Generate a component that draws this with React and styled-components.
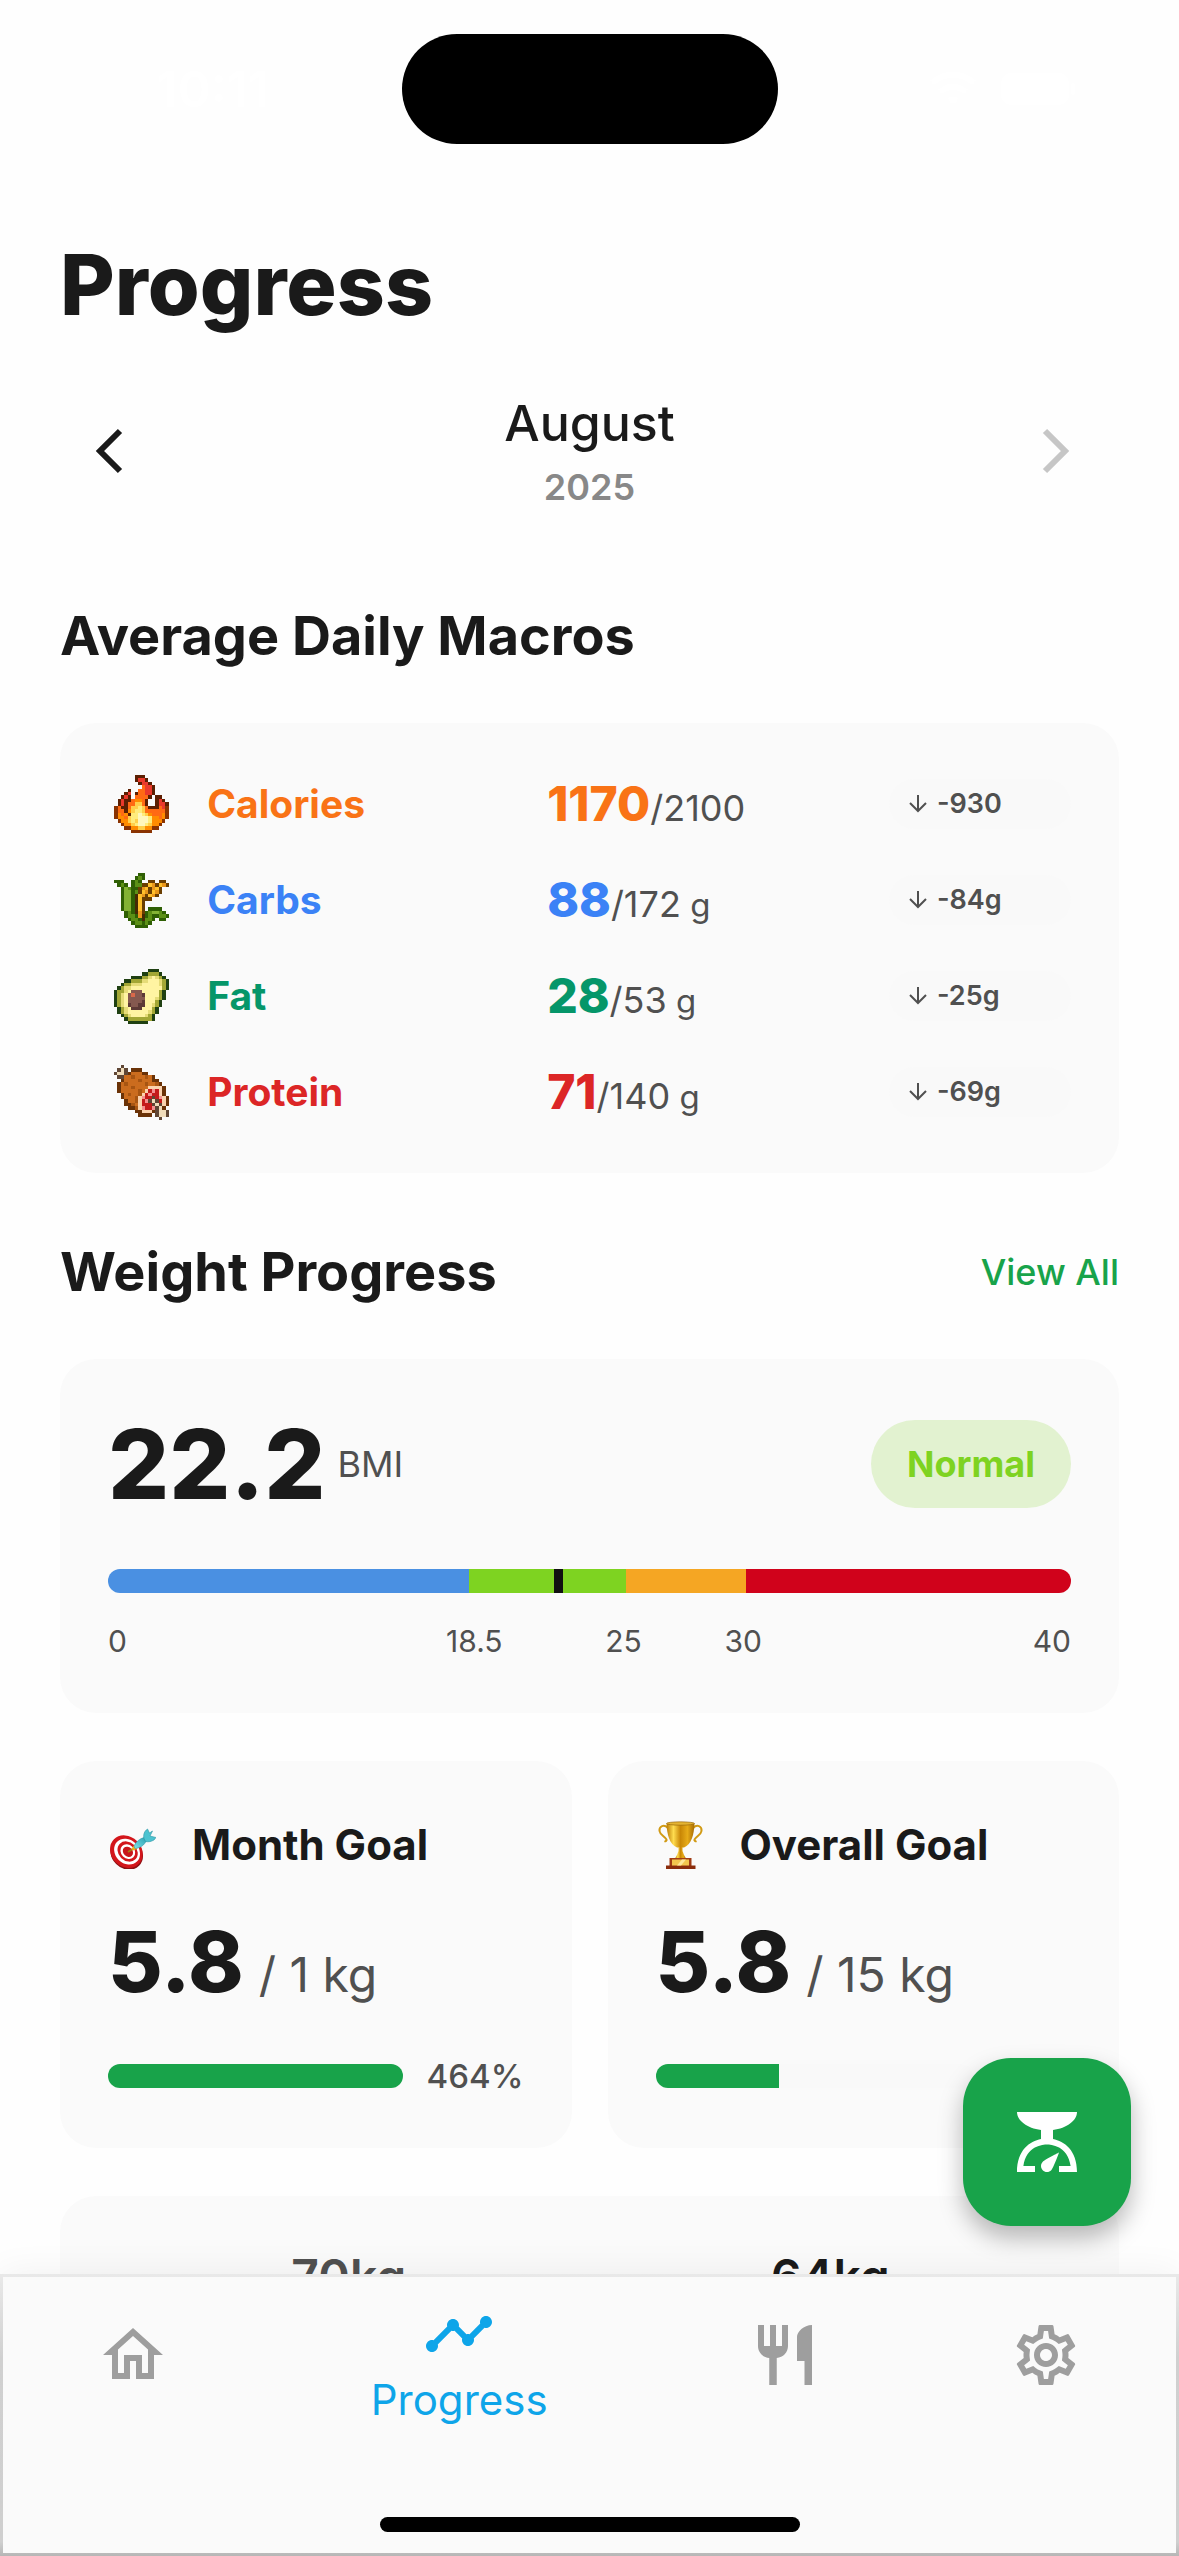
import React from "react";
import styled, { createGlobalStyle } from "styled-components";
import { MdOutlineHome, MdTimeline, MdRestaurant, MdOutlineSettings } from "react-icons/md";

const color = {
  page: "#fefefe",
  card: "#fafafa",
  track: "#f9f9f9",
  ink: "#1a1a1a",
  muted: "#505050",
  faint: "#888888",
  green: "#18a34a",
  blue: "#0ea5e9",
  idle: "#9e9e9e",
};

const GlobalStyle = createGlobalStyle`
  * { box-sizing: border-box; }
  body {
    margin: 0;
    background: ${color.page};
    color: ${color.ink};
    font-family: Inter, "Open Sans", sans-serif;
  }
  h1, h2, h3, p { margin: 0; }
  button { border: 0; padding: 0; background: none; font: inherit; color: inherit; cursor: pointer; }
  svg { display: block; }
`;

/* ---------- shell ---------- */

const Screen = styled.div`
  height: 100vh;
  display: flex;
  flex-direction: column;
  overflow: hidden;
`;

const StatusBar = styled.header`
  flex: none;
  display: grid;
  grid-template-columns: 1fr auto 1fr;
  align-items: center;
  height: 177px;
  color: #fff;
`;

const Clock = styled.time`
  justify-self: center;
  padding-left: 24px;
  font-size: 50px;
  line-height: 60px;
  font-weight: 600;
`;

const Island = styled.div`
  width: 376px;
  height: 110px;
  border-radius: 55px;
  background: #000;
`;

const Signals = styled.div`
  display: flex;
  gap: 24px;
  justify-self: center;
  padding-left: 48px;
`;

const Content = styled.main`
  flex: 1;
  min-height: 0;
  overflow: hidden;
  padding: 60px 60px 0;
`;

const Title = styled.h1`
  font-size: 84px;
  line-height: 96px;
  font-weight: 800;
`;

/* ---------- month picker ---------- */

const MonthPicker = styled.div`
  display: flex;
  align-items: center;
  justify-content: space-between;
  padding: 60px 12px 0;
`;

const StepButton = styled.button`
  width: 84px;
  height: 84px;
  color: ${(p) => (p.disabled ? "#c6c6c6" : color.ink)};
`;

const MonthLabel = styled.div`
  display: flex;
  flex-direction: column;
  align-items: center;
  gap: 12px;
`;

const Month = styled.span`
  font-size: 50px;
  line-height: 60px;
  font-weight: 500;
`;

const Year = styled.span`
  font-size: 36px;
  line-height: 45px;
  font-weight: 600;
  color: ${color.faint};
`;

/* ---------- sections ---------- */

const SectionHead = styled.div`
  display: flex;
  align-items: center;
  justify-content: space-between;
  margin: ${(p) => p.$top}px 0 54px;
`;

const SectionTitle = styled.h2`
  font-size: 54px;
  line-height: 66px;
  font-weight: 700;
`;

const TextLink = styled.a`
  font-size: 36px;
  line-height: 66px;
  font-weight: 500;
  color: ${color.green};
  text-decoration: none;
`;

const Card = styled.section`
  background: ${color.card};
  border-radius: 36px;
  padding: ${(p) => p.$pad || 48}px 48px;
`;

const Stack = styled.div`
  display: flex;
  flex-direction: column;
  gap: 48px;
`;

/* ---------- macros ---------- */

const MacroTable = styled.table`
  width: 100%;
  table-layout: fixed;
  border-collapse: collapse;
  text-align: left;

  th, td { height: 96px; padding: 0; vertical-align: middle; }
`;

const IconCol = styled.col`
  width: 99px;
`;

const ShareCol = styled.col`
  width: ${(p) => p.$share}%;
`;

const IconSlot = styled.span`
  display: flex;
  justify-content: center;
  width: 66px;
`;

const MacroName = styled.th`
  font-size: 39px;
  line-height: 48px;
  font-weight: 700;
  color: ${(p) => p.$tone};
`;

const MacroValue = styled.td`
  font-size: 36px;
  line-height: 36px;
  color: ${color.muted};
  white-space: nowrap;
`;

const Strong = styled.strong`
  font-size: 48px;
  line-height: 60px;
  font-weight: 800;
  color: ${(p) => p.$tone};
`;

const Unit = styled.span`
  font-size: 33px;
`;

const Delta = styled.span`
  display: flex;
  align-items: center;
  gap: 10px;
  height: 50px;
  padding-left: 20px;
  border-radius: 25px;
  background: ${color.track};
  font-size: 27px;
  line-height: 36px;
  font-weight: 600;
  color: ${color.muted};
`;

/* ---------- BMI ---------- */

const BmiHead = styled.div`
  display: flex;
  align-items: center;
  height: 114px;
`;

const BmiValue = styled.strong`
  font-size: 96px;
  line-height: 114px;
  font-weight: 800;
`;

const BmiUnit = styled.span`
  flex: 1;
  padding-left: 12px;
  font-size: 36px;
  line-height: 48px;
  color: ${color.muted};
`;

const StatusPill = styled.span`
  padding: 20px 36px;
  border-radius: 44px;
  background: #e2f2d0;
  font-size: 36px;
  line-height: 48px;
  font-weight: 700;
  color: #7ed321;
`;

const Scale = styled.div`
  position: relative;
  display: flex;
  height: 24px;
  margin: 48px 0 24px;
  border-radius: 12px;
  overflow: hidden;
`;

const Band = styled.span`
  flex: ${(p) => p.$weight};
  background: ${(p) => p.$tone};
`;

const Marker = styled.span`
  position: absolute;
  top: 0;
  bottom: 0;
  width: 9px;
  background: #111;
`;

const Ticks = styled.div`
  display: grid;
  grid-template-columns: 34fr 16fr 12fr 31fr auto;
  font-size: 30px;
  line-height: 48px;
  color: ${color.muted};
`;

/* ---------- goals ---------- */

const GoalGrid = styled.div`
  display: grid;
  grid-template-columns: 1fr 1fr;
  gap: 36px;
`;

const GoalHead = styled.div`
  display: flex;
  align-items: center;
  gap: 36px;
  height: 72px;
`;

const GoalTitle = styled.h3`
  font-size: 42px;
  line-height: 54px;
  font-weight: 700;
`;

const GoalValue = styled.p`
  display: flex;
  align-items: baseline;
  gap: 15px;
  margin: 36px 0 45px;
  font-size: 48px;
  line-height: 60px;
  color: ${color.muted};
  white-space: nowrap;
`;

const GoalNumber = styled.strong`
  font-size: 84px;
  line-height: 90px;
  font-weight: 800;
  color: ${color.ink};
`;

const GoalMeter = styled.div`
  display: flex;
  align-items: center;
  gap: 24px;
  font-size: 33px;
  line-height: 48px;
  font-weight: 500;
  color: ${color.muted};
`;

const Track = styled.div`
  flex: 1;
  height: 24px;
  border-radius: 12px;
  overflow: hidden;
  background: ${color.track};
`;

const Fill = styled.div`
  height: 100%;
  background: ${color.green};
`;

const WeightRow = styled.div`
  display: grid;
  grid-template-columns: 1fr 1fr;
  text-align: center;
`;

const Weight = styled.strong`
  font-size: 48px;
  line-height: 66px;
  font-weight: 600;
  color: ${(p) => (p.$muted ? color.muted : color.ink)};
`;

/* ---------- bottom chrome ---------- */

const Dock = styled.div`
  flex: none;
  position: relative;
`;

const AddWeight = styled.button`
  position: absolute;
  right: 48px;
  bottom: calc(100% + 48px);
  display: grid;
  place-items: center;
  width: 168px;
  height: 168px;
  border-radius: 48px;
  background: ${color.green};
  color: #fff;
  box-shadow: 0 12px 24px rgba(0, 0, 0, 0.28);
`;

const TabBar = styled.nav`
  position: relative;
  border: 3px solid;
  border-image: linear-gradient(#e9e9e9, #d0d0d0 30%, #cfcfcf 95%, #b6b6b6) 3;
  background: ${color.card};
  box-shadow: 0 0 36px rgba(0, 0, 0, 0.06);
`;

const Tabs = styled.div`
  display: flex;
  align-items: flex-start;
  height: 240px;
`;

const Tab = styled.a`
  flex: ${(p) => (p.$active ? 3 : 2)};
  display: flex;
  flex-direction: column;
  align-items: center;
  gap: 3px;
  padding-top: ${(p) => (p.$active ? 21 : 42)}px;
  font-size: 42px;
  line-height: 54px;
  color: ${(p) => (p.$active ? color.blue : color.idle)};
  text-decoration: none;
`;

const HomeIndicator = styled.div`
  width: 420px;
  height: 15px;
  margin: 0 auto 21px;
  border-radius: 8px;
  background: #000;
`;

/* ---------- drawings ---------- */

const sprites = {
  fire: {
    palette: { D: "#5c1f02", R: "#e9392c", O: "#ff6a14", A: "#ff8c00", B: "#8a3302", Y: "#ffcf4a", L: "#ffec7c", W: "#fff7bd" },
    rows: [
      "......DDD.......",
      "......DRRD......",
      ".......DRRD.....",
      "........ORRD....",
      "....D..OORRD....",
      "...DR.DOORRD....",
      "..DRD.OOOOD.DD..",
      ".DRDDOAAOD..DRD.",
      ".DRDOOYYOD..DRRD",
      "BODDOYYLYODDDORB",
      "BOODAYLLYOOOOOOB",
      "BAOADLLWLYAOOOAB",
      "BAAOYLLWWWLAAOAB",
      ".BAAYLYWWWLAAAB.",
      "..BAAYLWWLYAAB..",
      "...BBAAYYAABB...",
      ".....BBBBBB.....",
    ],
  },
  corn: {
    palette: { d: "#2f5f04", m: "#5c9016", l: "#83b234", b: "#6a3e02", k: "#452a05", y: "#ffc02c", a: "#e8961c" },
    rows: [
      ".......dd.......",
      "......dmd.......",
      "ddd..dmd..bb.bb.",
      ".dmd.dmmbbyabyab",
      "..dlmddbaybayb..",
      "..dlldmbyabyab..",
      "..dlldkyabyab...",
      "..dlldkybbb.....",
      "..dlldkyb.......",
      "..dlldkyb.......",
      "..dlldkyb.dddd..",
      "...dmdkabdmllmd.",
      "...dmmdakdmddmmd",
      "....dmmdkmmd.dd.",
      ".....dmmdmd.....",
      "......dddd......",
    ],
  },
  avocado: {
    palette: { D: "#1f4012", o: "#a3a735", q: "#e6dc78", p: "#fff4a2", n: "#85594f", N: "#5d3a36", r: "#d8694a" },
    rows: [
      "..........DDD...",
      "........DDoooD..",
      ".....DDDooqpqoD.",
      "...DDoooqqpppqoD",
      "..DooqqqpppppqoD",
      ".DoqqpppppppppoD",
      "DooqpnnnpppppoD.",
      "DoqpnrnnNppppoD.",
      "DoqpnnnnnpppqoD.",
      "DoqpnnnnNpppoD..",
      "DoqpNnnNNppqoD..",
      ".DoqpNNNpppoD...",
      ".DoqppppppqoD...",
      "..DoqppppqoD....",
      "...DoooooooD....",
      "....DDDDDD......",
    ],
  },
  meat: {
    palette: { b: "#6a3207", c: "#cb6c1e", e: "#a85512", w: "#f0dcba", k: "#5f4635", r: "#c41a1a", p: "#f49090", s: "#fbd3ae" },
    rows: [
      "..k.............",
      ".kwk.bbb........",
      "kwwkbcccbb......",
      ".kkccecccecb....",
      "..bccccecccbb...",
      ".bcecccccecceb..",
      ".bccceccccssssb.",
      ".bcccccecsrprsb.",
      "..bceccesrprrsb.",
      "..bcccesprrkrpsb",
      "...bccesrpkwkrsb",
      "...bbecsrrrkwksb",
      "....bbesprrpkwb.",
      "......bbsssbkwwk",
      ".......bbbb.kwwk",
      ".............k..",
    ],
  },
};

function Sprite({ name }) {
  const { palette, rows } = sprites[name];
  return (
    <svg width="55" height={Math.round(rows.length * 3.43)} viewBox={`0 0 16 ${rows.length}`} shapeRendering="crispEdges" aria-hidden="true">
      {rows.flatMap((row, y) =>
        [...row].map((c, x) =>
          palette[c] ? <rect key={`${x}-${y}`} x={x} y={y} width="1" height="1" fill={palette[c]} /> : null
        )
      )}
    </svg>
  );
}

const Chevron = ({ next }) => (
  <svg width="84" height="84" viewBox="0 0 84 84" fill="none" stroke="currentColor" strokeWidth="6" aria-hidden="true">
    <path d={next ? "M22 21 42 41 22 61" : "M48 21 28 41 48 61"} />
  </svg>
);

const ArrowDown = () => (
  <svg width="18" height="18" viewBox="0 0 18 18" fill="none" stroke="currentColor" strokeWidth="2" aria-hidden="true">
    <path d="M9 0V16M1 8l8 8 8-8" />
  </svg>
);

const Target = () => (
  <svg width="48" height="48" viewBox="0 0 48 48" aria-hidden="true">
    <defs>
      <linearGradient id="dart" x1="0" y1="1" x2="1" y2="0">
        <stop offset="0" stopColor="#7fe3ea" />
        <stop offset="1" stopColor="#2a9fb0" />
      </linearGradient>
    </defs>
    <g transform="rotate(45 18 31)">
      <ellipse cx="19.5" cy="31.500" rx="17.500" ry="15" fill="#8d1013" />
      <ellipse cx="18" cy="30.500" rx="17.500" ry="15" fill="#d3161b" />
      <ellipse cx="18.500" cy="30" rx="14" ry="11.800" fill="#fff" />
      <ellipse cx="18.800" cy="29.500" rx="11" ry="9.200" fill="#d3161b" />
      <ellipse cx="19" cy="29.500" rx="8" ry="6.700" fill="#fff" />
      <ellipse cx="19.200" cy="29.500" rx="5.600" ry="4.600" fill="#c8151a" />
    </g>
    <path d="M20 31 27 26.500" stroke="#a87a10" strokeWidth="1.800" />
    <path d="m23.500 28 3-4.500 3 4-4 2z" fill="#f0b51c" />
    <path d="M26 25c2-4.500 6-7.500 10-8.500l2.500 3c-2 4.500-6 7.500-11.500 8z" fill="url(#dart)" stroke="#2b93a3" strokeWidth=".5" />
    <path d="M36 17.500c-1-4 .5-7.500 3.500-9.500l2 4 3-2-2.500 5 6 1.500-2 2.500c-3.500 2-6.500 2-8.500 1.500z" fill="#4cc3d0" stroke="#2b93a3" strokeWidth=".6" />
  </svg>
);

const Trophy = () => (
  <svg width="48" height="48" viewBox="0 0 48 48" aria-hidden="true">
    <defs>
      <linearGradient id="cup">
        <stop offset="0" stopColor="#b97a04" />
        <stop offset=".25" stopColor="#ffdc4f" />
        <stop offset=".5" stopColor="#c98706" />
        <stop offset=".75" stopColor="#e7ab18" />
        <stop offset="1" stopColor="#a76a02" />
      </linearGradient>
    </defs>
    <g fill="none" stroke="#d19a14" strokeWidth="2">
      <path d="M12 7C8 3 3 5 3.500 10c.5 4 5 5 7 8.500.5 1-1 2-2 1.500" />
      <path d="M37 7c4-4 9-2 8.500 3-.5 4-5 5-7 8.500-.5 1 1 2 2 1.500" />
    </g>
    <path d="M10.500 2.500C11 14 13.500 23 21 26.500h7C35.500 23 38 14 38.500 2.500z" fill="url(#cup)" />
    <ellipse cx="24.500" cy="2.500" rx="14" ry="1.700" fill="#e4b332" stroke="#8d5b03" strokeWidth=".6" />
    <path d="M22.500 26h4v4l1.500 4 2 3.500H19l2-3.500 1.500-4z" fill="url(#cup)" />
    <path d="M13.500 37h22v8h-22z" fill="#a03c14" />
    <path d="M10 44.500h29.500V48H10z" fill="#8a2c0c" />
    <path d="M16 38.500h17v6H16z" fill="#f3c64e" />
    <path d="m21 44.500 5-6h4l-5 6z" fill="#ffe79a" />
  </svg>
);

const KitchenScale = () => (
  <svg width="72" height="72" viewBox="0 0 24 24" fill="currentColor" aria-hidden="true">
    <path d="M14 11V8c4.560-.58 8-3.100 8-6H2c0 2.900 3.440 5.420 8 6v3c-3.680.73-8 3.610-8 11h6v-2H4.130c.93-6.830 6.650-7.200 7.870-7.200s6.940.37 7.870 7.200H16v2h6c0-7.390-4.320-10.270-8-11z" />
    <path d="M12 22c-1.100 0-2-.9-2-2 0-.55.22-1.050.59-1.410C11.390 17.790 16 15.500 16 15.500s-1.790 5.110-2.590 5.910c-.36.37-.86.59-1.410.59z" />
  </svg>
);

const Wifi = () => (
  <svg width="48" height="36" viewBox="0 0 48 36" fill="none" stroke="currentColor" strokeWidth="6" aria-hidden="true">
    <path d="M3 12c12-11 30-11 42 0M11 21c8-7 18-7 26 0M20 30c3-2 5-2 8 0" />
  </svg>
);

const Battery = () => (
  <svg width="75" height="36" viewBox="0 0 75 36" fill="currentColor" aria-hidden="true">
    <rect x="0" y="2" width="68" height="32" rx="10" />
    <rect x="70" y="12" width="4" height="12" rx="2" />
  </svg>
);

/* ---------- data ---------- */

const macros = [
  { name: "Calories", sprite: "fire", tone: "#f97316", value: "1170", goal: "2100", delta: "-930" },
  { name: "Carbs", sprite: "corn", tone: "#3b82f6", value: "88", goal: "172", unit: "g", delta: "-84g" },
  { name: "Fat", sprite: "avocado", tone: "#059669", value: "28", goal: "53", unit: "g", delta: "-25g" },
  { name: "Protein", sprite: "meat", tone: "#dc2626", value: "71", goal: "140", unit: "g", delta: "-69g" },
];

const bands = [
  { weight: 30, tone: "#4a90e2" },
  { weight: 13, tone: "#7ed321" },
  { weight: 10, tone: "#f5a623" },
  { weight: 27, tone: "#d0021b" },
];

const goals = [
  { title: "Month Goal", icon: <Target />, value: "5.8", goal: "1 kg", percent: 464 },
  { title: "Overall Goal", icon: <Trophy />, value: "5.8", goal: "15 kg", percent: 39 },
];

const tabs = [
  { name: "Home", Icon: MdOutlineHome },
  { name: "Progress", Icon: MdTimeline, active: true },
  { name: "Food", Icon: MdRestaurant },
  { name: "Settings", Icon: MdOutlineSettings },
];

export default function App() {
  return (
    <Screen>
      <GlobalStyle />
      <StatusBar>
        <Clock>10:11</Clock>
        <Island />
        <Signals>
          <Wifi />
          <Battery />
        </Signals>
      </StatusBar>

      <Content>
        <Title>Progress</Title>

        <MonthPicker>
          <StepButton type="button" aria-label="Previous month">
            <Chevron />
          </StepButton>
          <MonthLabel>
            <Month>August</Month>
            <Year>2025</Year>
          </MonthLabel>
          <StepButton type="button" aria-label="Next month" disabled>
            <Chevron next />
          </StepButton>
        </MonthPicker>

        <SectionHead $top={93}>
          <SectionTitle>Average Daily Macros</SectionTitle>
        </SectionHead>
        <Card $pad={33}>
          <MacroTable>
            <colgroup>
              <IconCol />
              <ShareCol $share={35.3} />
              <ShareCol $share={35.5} />
              <ShareCol $share={18.9} />
            </colgroup>
            <tbody>
              {macros.map((m) => (
                <tr key={m.name}>
                  <td>
                    <IconSlot>
                      <Sprite name={m.sprite} />
                    </IconSlot>
                  </td>
                  <MacroName scope="row" $tone={m.tone}>{m.name}</MacroName>
                  <MacroValue>
                    <Strong $tone={m.tone}>{m.value}</Strong>/{m.goal}
                    {m.unit && <Unit> {m.unit}</Unit>}
                  </MacroValue>
                  <td>
                    <Delta>
                      <ArrowDown />
                      {m.delta}
                    </Delta>
                  </td>
                </tr>
              ))}
            </tbody>
          </MacroTable>
        </Card>

        <SectionHead $top={66}>
          <SectionTitle>Weight Progress</SectionTitle>
          <TextLink href="#weight">View All</TextLink>
        </SectionHead>

        <Stack>
          <Card>
            <BmiHead>
              <BmiValue>22.2</BmiValue>
              <BmiUnit>BMI</BmiUnit>
              <StatusPill>Normal</StatusPill>
            </BmiHead>
            <Scale>
              {bands.map((b) => (
                <Band key={b.tone} $weight={b.weight} $tone={b.tone} />
              ))}
              <Marker style={{ left: "46.3%" }} />
            </Scale>
            <Ticks>
              <span>0</span>
              <span>18.5</span>
              <span>25</span>
              <span>30</span>
              <span>40</span>
            </Ticks>
          </Card>

          <GoalGrid>
            {goals.map((g) => (
              <Card key={g.title}>
                <GoalHead>
                  {g.icon}
                  <GoalTitle>{g.title}</GoalTitle>
                </GoalHead>
                <GoalValue>
                  <GoalNumber>{g.value}</GoalNumber>
                  <span>/ {g.goal}</span>
                </GoalValue>
                <GoalMeter>
                  <Track>
                    <Fill style={{ width: `${Math.min(g.percent, 100)}%` }} />
                  </Track>
                  <span>{g.percent}%</span>
                </GoalMeter>
              </Card>
            ))}
          </GoalGrid>

          <Card>
            <WeightRow>
              <Weight $muted>70kg</Weight>
              <Weight>64kg</Weight>
            </WeightRow>
          </Card>
        </Stack>
      </Content>

      <Dock>
        <AddWeight type="button" aria-label="Add weight">
          <KitchenScale />
        </AddWeight>
        <TabBar>
          <Tabs>
            {tabs.map(({ name, Icon, active }) => (
              <Tab key={name} href={`#${name.toLowerCase()}`} $active={active} aria-label={name}>
                <Icon size={72} aria-hidden="true" />
                {active && <span>{name}</span>}
              </Tab>
            ))}
          </Tabs>
          <HomeIndicator />
        </TabBar>
      </Dock>
    </Screen>
  );
}
